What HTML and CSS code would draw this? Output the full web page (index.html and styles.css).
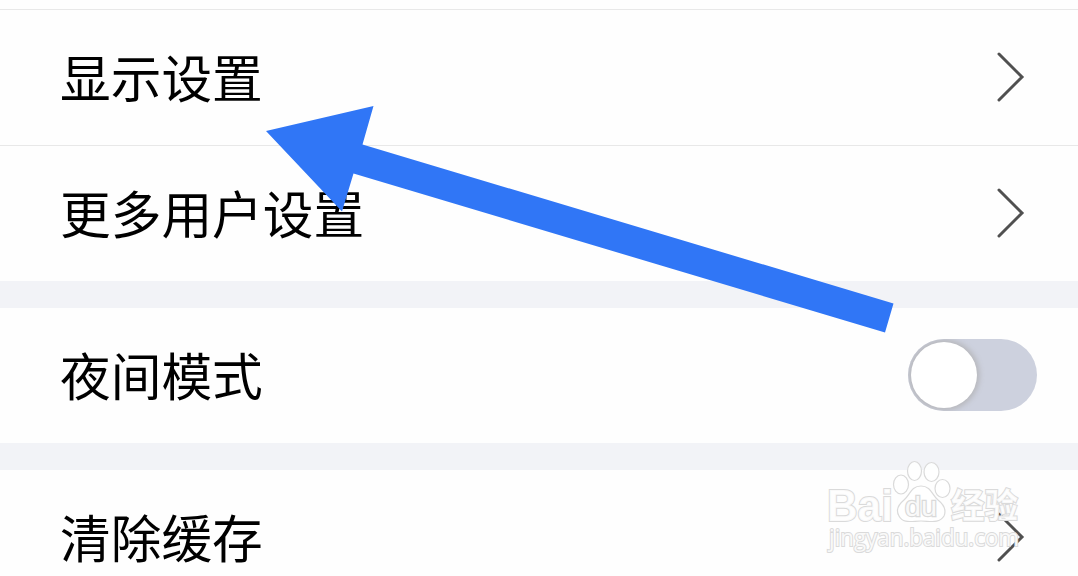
FILE: index.html
```html
<!DOCTYPE html>
<html lang="zh-CN">
<head>
<meta charset="utf-8">
<title>设置</title>
<link rel="stylesheet" href="styles.css">
</head>
<body>
<main class="settings">
  <section class="group first">
    <div class="row"><span class="label">显示设置</span><svg class="chevron" viewBox="0 0 30 52"><path d="M3 3 26 26 3 49"/></svg></div>
    <div class="row divided"><span class="label">更多用户设置</span><svg class="chevron" viewBox="0 0 30 52"><path d="M3 3 26 26 3 49"/></svg></div>
  </section>
  <section class="group">
    <div class="row"><span class="label">夜间模式</span><span class="switch"><span class="knob"></span></span></div>
  </section>
  <section class="group">
    <div class="row"><span class="label">清除缓存</span><svg class="chevron" viewBox="0 0 30 52"><path d="M3 3 26 26 3 49"/></svg></div>
  </section>
  <svg class="arrow" viewBox="0 0 1078 576"><path d="M266 131 373.500 106 362.500 144.500 893.500 303.500 885 332.500 353.500 173.500 342 211.500Z"/></svg>
  <svg class="watermark" viewBox="820 450 210 110">
    <text class="mark latin" x="827" y="520.500" textLength="66" lengthAdjust="spacingAndGlyphs">Bai</text>
    <ellipse cx="901" cy="484.500" rx="7.500" ry="9.500"/>
    <ellipse cx="914.500" cy="471" rx="7" ry="9.500"/>
    <ellipse cx="931.500" cy="472" rx="7.500" ry="9.500"/>
    <ellipse cx="942.500" cy="488.500" rx="7.500" ry="9"/>
    <path d="M921 486C911 486 910 495 904 500C898 505 896 511 899 516C903 524 912 521 921 521C930 521 939 524 944 516C947 509 943 504 938 500C932 495 931 486 921 486Z"/>
    <text class="mark du" x="905" y="516" textLength="32" lengthAdjust="spacingAndGlyphs">du</text>
    <text class="mark chinese" x="951" y="517.500" textLength="67" lengthAdjust="spacingAndGlyphs">经验</text>
    <text class="mark address" x="829" y="546" textLength="190" lengthAdjust="spacingAndGlyphs">jingyan.baidu.com</text>
  </svg>
</main>
</body>
</html>
```
FILE: styles.css
```css
body {
  margin: 0;
  background: #fefefe;
}

.settings {
  position: relative;
  width: 1078px;
  height: 576px;
  overflow: hidden;
  font-family: "Noto Sans CJK SC", sans-serif;
  color: #000;
}

.group {
  border-top: 27px solid #f2f3f7;
}

.group.first {
  margin-top: 9px;
  border-top: 1px solid #e8e8e8;
}

.row {
  display: flex;
  align-items: center;
  justify-content: space-between;
  box-sizing: border-box;
  height: 135px;
  padding: 0 52px 2px 60px;
}

.row.divided {
  height: 136px;
  border-top: 1px solid #e8e8e8;
}

.label {
  padding-bottom: 2px;
  font-size: 50.7px;
  line-height: 76px;
  white-space: nowrap;
}

.chevron {
  width: 30px;
  height: 52px;
  fill: none;
  stroke: #505050;
  stroke-width: 3;
  stroke-linecap: round;
}

.switch {
  display: flex;
  align-items: center;
  box-sizing: border-box;
  width: 129px;
  height: 72px;
  margin-right: -11px;
  padding-left: 3px;
  border-radius: 36px;
  background: #cdd1de;
  overflow: hidden;
}

.knob {
  width: 66px;
  height: 66px;
  border-radius: 50%;
  background: #fff;
  box-shadow: 0 0 5px 3px #b9babf;
}

.arrow {
  position: absolute;
  inset: 0;
  width: 1078px;
  height: 576px;
  fill: #3076f6;
}

.watermark {
  position: absolute;
  left: 820px;
  top: 450px;
  width: 210px;
  height: 110px;
  fill: rgba(255, 255, 255, 0.85);
  stroke: #dadada;
  stroke-width: 1.2;
}

.mark {
  font-family: "Liberation Sans", sans-serif;
  paint-order: stroke;
  stroke-width: 2;
}

.latin {
  font-size: 44px;
  font-weight: 700;
}

.du {
  font-size: 27px;
  font-weight: 400;
  stroke-width: 2.4;
}

.chinese {
  font-family: "Noto Sans CJK SC", sans-serif;
  font-size: 34px;
  font-weight: 700;
}

.address {
  font-family: "Open Sans", sans-serif;
  font-size: 24px;
}
```
